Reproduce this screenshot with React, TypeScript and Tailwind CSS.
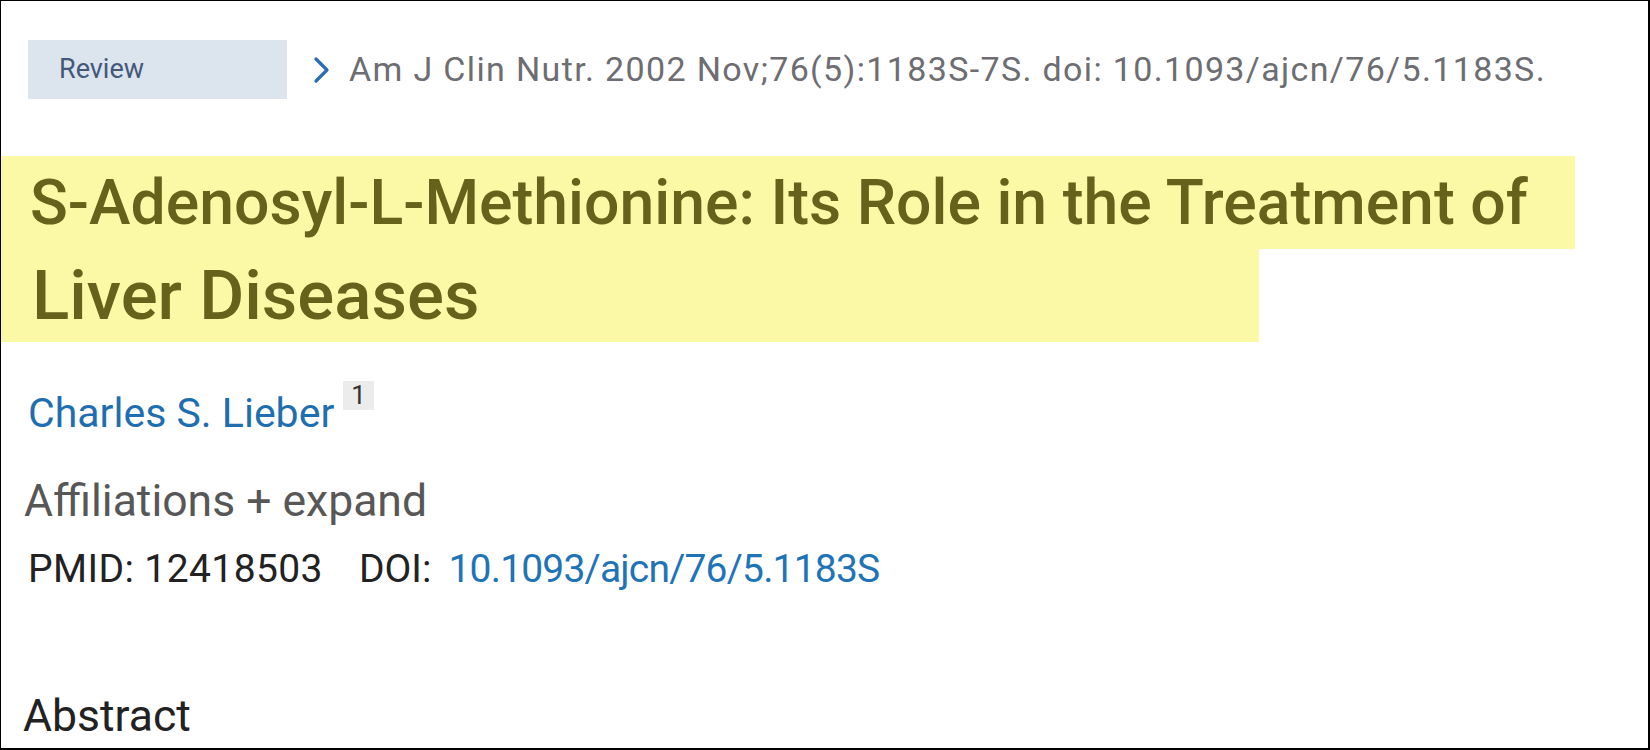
const Chevron = () => (
  <svg width="18" height="28" viewBox="0 0 18 28" className="shrink-0">
    <polyline points="3,3 14,14 3,25" fill="none" stroke="#2a6db5" strokeWidth="3.2" strokeLinecap="round" strokeLinejoin="round" />
  </svg>
);

export default function App() {
  return (
    <div className="w-[1650px] h-[750px] overflow-hidden bg-white border-l border-t border-r-2 border-b-2 border-black font-['Roboto','Liberation_Sans',sans-serif]">
      {/* publication type + citation */}
      <div className="pt-[39px] pl-[27px] flex items-center">
        <span className="w-[259px] h-[59px] bg-[#dce4ee] flex items-center pl-[31px] text-[27px] font-normal text-[#44587a]">
          Review
        </span>
        <span className="ml-[26px] flex items-center">
          <Chevron />
        </span>
        <span className="ml-[18px] text-[34px] text-[#6d6d72] tracking-[1.35px]">
          Am J Clin Nutr. 2002 Nov;76(5):1183S-7S. doi: 10.1093/ajcn/76/5.1183S.
        </span>
      </div>

      <h1 className="mt-[57px] leading-[93px] font-medium text-[#66621b]">
        <span className="block w-[1574px] bg-[#fcf9a6] pl-[29px] text-[62.5px]">
          S-Adenosyl-L-Methionine: Its Role in the Treatment of
        </span>
        <span className="block w-[1258px] bg-[#fcf9a6] pl-[31px] text-[69px]">Liver Diseases</span>
      </h1>

      <div className="mt-[47px] pl-[27px] flex items-start leading-[48px]">
        <span className="text-[41px] text-[#1f6fb0]">Charles S. Lieber</span>
        <span className="ml-[9px] mt-[-8px] bg-[#ececec] px-[8px] text-[26px] leading-[29px] text-[#333]">1</span>
      </div>

      <div className="mt-[40px] pl-[23px] text-[44.5px] leading-[48px] text-[#575757]">Affiliations + expand</div>

      <div className="mt-[20px] pl-[27px] text-[39px] leading-[48px] text-[#222]">
        <span className="tracking-[0.4px]">PMID: 12418503</span>
        <span className="ml-[36px]">DOI:</span>
        <span className="ml-[17px] text-[#1f74b8] tracking-[-0.8px]">10.1093/ajcn/76/5.1183S</span>
      </div>

      <h2 className="mt-[97px] pl-[22px] text-[44.5px] leading-[52px] font-normal text-[#222]">Abstract</h2>
    </div>
  );
}
